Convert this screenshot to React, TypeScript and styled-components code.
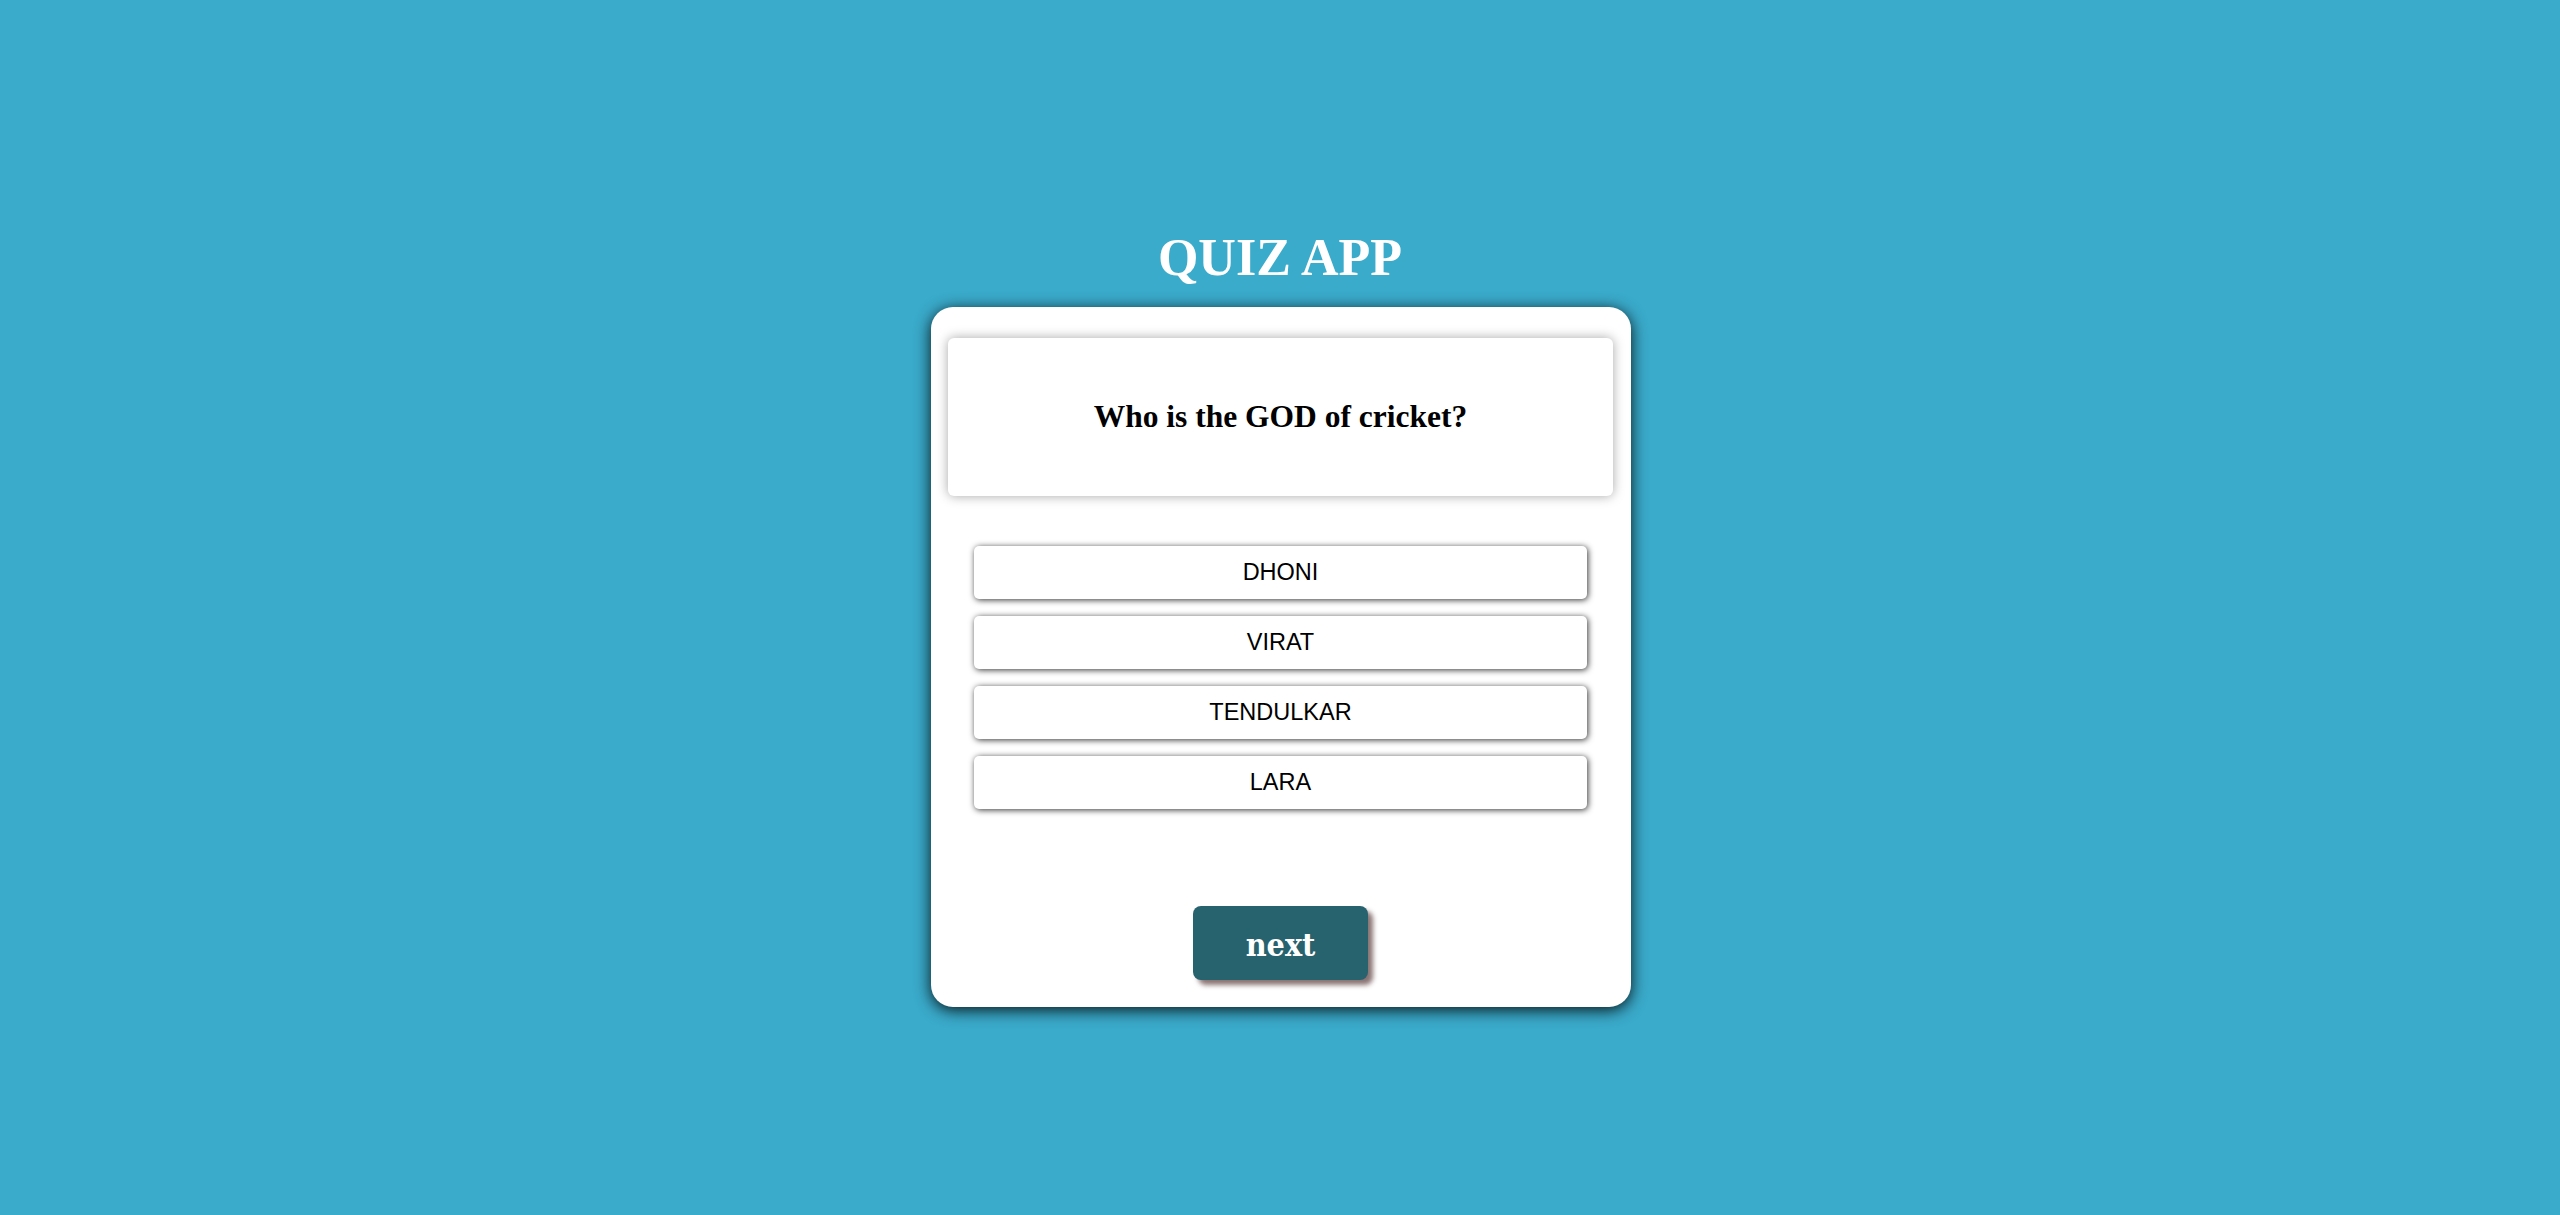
import React from "react";
import styled, { createGlobalStyle } from "styled-components";

const GlobalStyle = createGlobalStyle`
  html, body {
    margin: 0;
    padding: 0;
    background: #3aabcb;
  }
  body {
    min-height: 100vh;
    font-family: "Liberation Serif", "Times New Roman", serif;
  }
`;

const Page = styled.main`
  min-height: 1215px;
  display: flex;
  flex-direction: column;
  align-items: center;
  padding-top: 228px;
  box-sizing: border-box;
`;

const Title = styled.h1`
  margin: 0 0 20px;
  font-family: "Liberation Serif", "Times New Roman", serif;
  font-weight: 700;
  font-size: 52px;
  line-height: 59px;
  color: #ffffff;
  text-align: center;
`;

const Card = styled.section`
  width: 700px;
  height: 700px;
  box-sizing: border-box;
  margin-left: 2px;
  background: #ffffff;
  border-radius: 22px;
  padding: 31px 18px 27px 17px;
  display: flex;
  flex-direction: column;
  align-items: center;
  box-shadow: 0 3px 16px rgba(0, 0, 0, 0.9);
`;

const QuestionBox = styled.div`
  width: 100%;
  height: 158px;
  background: #ffffff;
  border-radius: 6px;
  box-shadow: 0 0 12px rgba(0, 0, 0, 0.35);
  display: flex;
  align-items: center;
  justify-content: center;
`;

const QuestionText = styled.h2`
  margin: 0;
  font-family: "Liberation Serif", "Times New Roman", serif;
  font-weight: 700;
  font-size: 31.5px;
  color: #000000;
`;

const OptionList = styled.ul`
  list-style: none;
  margin: 50px 0 0;
  padding: 0;
  width: 613px;
  display: flex;
  flex-direction: column;
  gap: 17px;
`;

const Option = styled.li`
  height: 53px;
  background: #ffffff;
  border-radius: 5px;
  box-shadow: 1px 1px 6px rgba(0, 0, 0, 0.8);
  display: flex;
  align-items: center;
  justify-content: center;
  font-family: "Liberation Sans", Arial, sans-serif;
  font-size: 23.5px;
  color: #000000;
  cursor: pointer;
`;

const NextButton = styled.button`
  margin-top: 97px;
  width: 175px;
  height: 74px;
  padding: 4px 0 0;
  border: none;
  border-radius: 8px;
  background: #27626f;
  color: #ffffff;
  font-family: "DejaVu Serif", Georgia, serif;
  font-stretch: condensed;
  font-weight: 700;
  font-size: 32px;
  box-shadow: 5px 5px 5px #8a7474;
  cursor: pointer;
`;

const options = ["DHONI", "VIRAT", "TENDULKAR", "LARA"];

export default function App() {
  return (
    <>
      <GlobalStyle />
      <Page>
        <Title>QUIZ APP</Title>
        <Card>
          <QuestionBox>
            <QuestionText>Who is the GOD of cricket?</QuestionText>
          </QuestionBox>
          <OptionList>
            {options.map((o) => (
              <Option key={o}>{o}</Option>
            ))}
          </OptionList>
          <NextButton>next</NextButton>
        </Card>
      </Page>
    </>
  );
}
